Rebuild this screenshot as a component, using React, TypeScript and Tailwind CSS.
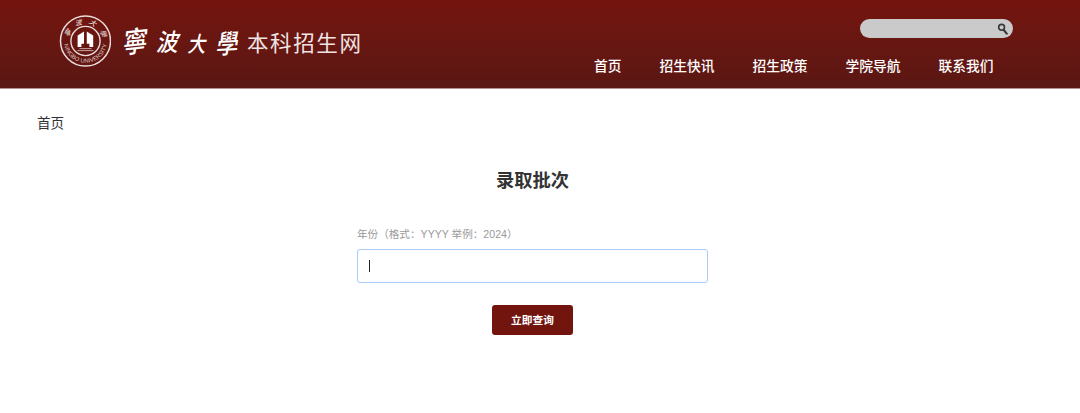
import { useState } from "react";

type NavItem = Readonly<{
  label: string;
  href: string;
}>;

const NAV_ITEMS: NavItem[] = [
  { label: "首页", href: "#home" },
  { label: "招生快讯", href: "#news" },
  { label: "招生政策", href: "#policy" },
  { label: "学院导航", href: "#colleges" },
  { label: "联系我们", href: "#contact" },
];

// Round university seal: two rings, the gate mark and the lettering between them
function Seal() {
  return (
    <svg viewBox="0 0 52 52" className="size-[52px] shrink-0" fill="none" aria-hidden="true">
      <circle cx="26.5" cy="26" r="25" stroke="#eadcda" strokeWidth="1.5" />
      <circle cx="26.5" cy="26" r="14.6" stroke="#eadcda" strokeWidth="1.4" />
      <path d="M18.6 32V20.6l6.4-4.2v12.4h-2.6V32zM34.2 32V20.6l-6.4-4.2v12.4h2.6V32z" fill="#fff" />
      <path d="M20.5 33.6h12M18.5 35.6h16" stroke="#dcc5c3" strokeWidth=".8" />
      <defs>
        <path id="seal-top" d="M9.7 26a16.8 16.8 0 0 1 33.6 0" />
        <path id="seal-bottom" d="M4.8 26a21.7 21.7 0 0 0 43.4 0" />
      </defs>
      <text fill="#f0e4e3" fontSize="7" fontStyle="italic" textAnchor="middle" letterSpacing="5.8">
        <textPath href="#seal-top" startOffset="55%">寧波大學</textPath>
      </text>
      <text fill="#dfc9c7" fontSize="5.8" textAnchor="middle" letterSpacing=".1" fontFamily="Liberation Sans">
        <textPath href="#seal-bottom" startOffset="50%">NINGBO UNIVERSITY</textPath>
      </text>
    </svg>
  );
}

function Brand() {
  return (
    <a href="#home" className="flex h-[52px] items-center text-white">
      <Seal />
      <span className="mt-[3px] ml-[10px] flex w-[116px] items-center justify-between leading-none font-medium italic">
        <span className="-rotate-6 scale-y-115 text-[25px]">寧</span>
        <span className="scale-y-110 text-[22px]">波</span>
        <span className="mt-1 scale-y-120 text-[18px]">大</span>
        <span className="mt-1 -rotate-3 scale-y-120 text-[22px]">學</span>
      </span>
      <span className="mt-[8px] ml-[10px] text-[21.5px] leading-none tracking-[1.6px] text-[#f0e4e3]">
        本科招生网
      </span>
    </a>
  );
}

function SearchBox() {
  return (
    <form
      role="search"
      className="flex h-[19px] w-[153px] items-center rounded-full bg-[#cacaca] pr-[4px] pl-3"
      onSubmit={(e) => e.preventDefault()}
    >
      <input aria-label="搜索" className="min-w-0 flex-1 bg-transparent text-[11px] text-[#333] outline-none" />
      <button type="submit" aria-label="搜索" className="shrink-0">
        <svg viewBox="0 0 12 12" className="size-3" fill="none" stroke="#383838">
          <circle cx="4.6" cy="4.3" r="2.9" strokeWidth="1.6" />
          <path d="M6.8 7l2.9 3.6" strokeWidth="2.1" strokeLinecap="round" />
        </svg>
      </button>
    </form>
  );
}

function Header() {
  return (
    <header className="flex h-[89px] justify-between border-b border-[#b98f8d] bg-linear-to-b from-[#75150f] to-[#5a1713] pl-[59px]">
      <div className="pt-[15px]">
        <Brand />
      </div>
      <div className="flex flex-col items-end pt-[19px]">
        <div className="pr-[67px]">
          <SearchBox />
        </div>
        <nav className="mt-[19px] flex gap-[38px] pr-[86.4px] text-[13.75px] leading-5 font-medium text-white">
          {NAV_ITEMS.map((item) => (
            <a key={item.href} href={item.href}>
              {item.label}
            </a>
          ))}
        </nav>
      </div>
    </header>
  );
}

function QueryForm() {
  const [year, setYear] = useState("");
  return (
    <form className="mt-[33px] flex w-[351px] flex-col" onSubmit={(e) => e.preventDefault()}>
      <label htmlFor="year" className="text-[10.6px] leading-4 text-[#999]">
        年份（格式：YYYY 举例：2024）
      </label>
      <div className="mt-[7px] flex h-[34px] items-center rounded-[3px] border border-[#a9cbf9] bg-white pl-[11px]">
        {/* Caret shown while the field is empty */}
        {year === "" && <span className="h-3 w-px bg-[#222]" />}
        <input
          id="year"
          value={year}
          onChange={(e) => setYear(e.target.value)}
          className="h-full min-w-0 flex-1 bg-transparent text-[12px] text-[#333] caret-transparent outline-none"
        />
      </div>
      <button
        type="submit"
        className="mt-[22.4px] h-[30px] w-[81px] self-center rounded-[3px] bg-[#72150f] text-[10.7px] font-bold text-white"
      >
        立即查询
      </button>
    </form>
  );
}

export default function App() {
  return (
    <div className="h-[413px] w-[1080px] overflow-hidden bg-white font-['Liberation_Sans','Noto_Sans_CJK_SC',sans-serif]">
      <Header />
      <div className="mt-[25px] pl-[37px] text-[13.6px] leading-5 text-[#333]">首页</div>
      <main className="flex flex-col items-center pr-[15px]">
        <h1 className="mt-[35px] text-[18.3px] leading-6 font-bold text-[#333]">录取批次</h1>
        <QueryForm />
      </main>
    </div>
  );
}
